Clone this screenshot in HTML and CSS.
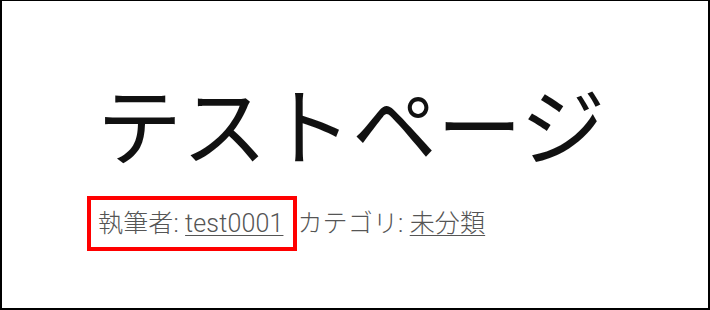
FILE: index.html
```html
<!DOCTYPE html>
<html lang="ja">
<head>
<meta charset="utf-8">
<title>テストページ</title>
<link rel="stylesheet" href="styles.css">
</head>
<body>
<div class="frame">
  <h1 class="title">テストページ</h1>
  <div class="meta">
    <span class="highlight">執筆者: <a class="meta-link" href="#">test0001</a></span>
    <span class="cat">カテゴリ: <a class="meta-link" href="#">未分類</a></span>
  </div>
</div>
</body>
</html>
```
FILE: styles.css
```css
html, body {
  margin: 0;
  padding: 0;
  background: #fff;
}
.frame {
  width: 710px;
  height: 310px;
  box-sizing: border-box;
  border-style: solid;
  border-color: #000;
  border-width: 1px 2px 2px 2px;
  padding-left: 95px;
  background: #fff;
}
.title {
  margin: 78px 0 0 0;
  font-family: "Noto Sans CJK JP", sans-serif;
  font-weight: 400;
  font-size: 85px;
  line-height: 86px;
  color: #111;
}
.meta {
  display: flex;
  align-items: baseline;
  margin-top: 31px;
  margin-left: -10px;
  font-family: "Roboto", "Noto Sans CJK JP", sans-serif;
  font-weight: 300;
  font-size: 25px;
  line-height: 23px;
  letter-spacing: 0.15px;
  color: #555;
}
.highlight {
  border: 4px solid #f00;
  padding: 12px 10px 12px 7px;
}
.meta-link {
  color: #555;
  text-decoration: underline;
  text-decoration-thickness: 1px;
  text-underline-offset: 3px;
}
```
